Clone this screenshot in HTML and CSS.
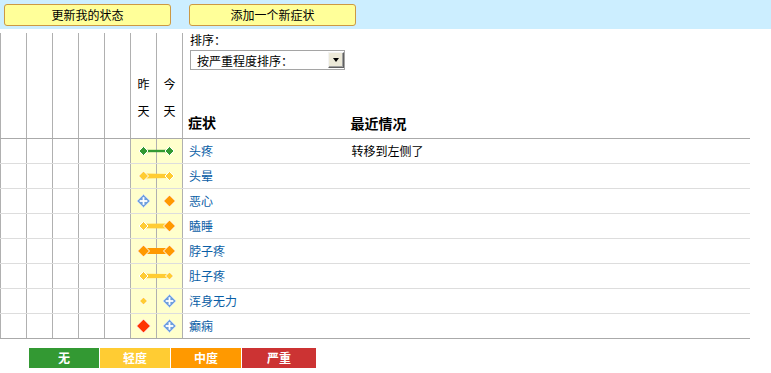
FILE: index.html
```html
<!DOCTYPE html>
<html lang="zh-CN">
<head>
    <meta charset="UTF-8">
    <title>症状追踪</title>
    <link rel="stylesheet" href="styles.css">
</head>
<body>

<div class="topbar">
    <button class="action-btn">更新我的状态</button>
    <button class="action-btn">添加一个新症状</button>
</div>

<svg class="defs" width="0" height="0">
    <defs>
        <g id="plus">
            <path d="M0 -6.5L6.5 0 0 6.5 -6.5 0Z" fill="#6f9fdc" stroke="#c9dcf4" stroke-width="1"/>
            <rect x="-3.8" y="-0.9" width="7.6" height="1.8" fill="#fff"/>
            <rect x="-0.9" y="-3.8" width="1.8" height="7.6" fill="#fff"/>
        </g>
    </defs>
</svg>

<table class="tracker">
    <colgroup>
        <col class="c-blank"><col class="c-blank"><col class="c-blank"><col class="c-blank"><col class="c-blank">
        <col class="c-day"><col class="c-day">
        <col class="c-name"><col>
    </colgroup>
    <thead>
        <tr>
            <th class="grid"></th>
            <th class="grid"></th>
            <th class="grid"></th>
            <th class="grid"></th>
            <th class="grid"></th>
            <th class="grid day-head">昨<br>天</th>
            <th class="grid day-head">今<br>天</th>
            <th class="name-head">
                <div class="sort-label">排序：</div>
                <div class="sort-box">
                    <select class="sort-select">
                        <option>按严重程度排序：</option>
                        <option>按名称排序</option>
                    </select>
                    <span class="sort-arrow"></span>
                </div>
                <div class="col-title">症状</div>
            </th>
            <th class="recent-head"><div class="col-title">最近情况</div></th>
        </tr>
    </thead>
    <tbody>
        <tr>
            <td class="grid"></td><td class="grid"></td><td class="grid"></td><td class="grid"></td><td class="grid"></td>
            <td class="grid day yest">
                <svg class="trend" width="52" height="25" viewBox="0 0 52 25">
                    <rect x="14" y="11.8" width="25" height="2.4" fill="#339933"/>
                    <path d="M13.5 8.5L18 13 13.5 17.5 9 13Z" fill="#339933" stroke="#fff"/>
                    <path d="M39.5 8.5L44 13 39.5 17.5 35 13Z" fill="#339933" stroke="#fff"/>
                </svg>
            </td>
            <td class="grid day"></td>
            <td class="name"><a href="#">头疼</a></td>
            <td class="recent">转移到左侧了</td>
        </tr>
        <tr>
            <td class="grid"></td><td class="grid"></td><td class="grid"></td><td class="grid"></td><td class="grid"></td>
            <td class="grid day yest">
                <svg class="trend" width="52" height="25" viewBox="0 0 52 25">
                    <polygon points="14,10.5 39,11 39,15 14,15.5" fill="#ffcc33"/>
                    <path d="M13.5 8L18.5 13 13.5 18 8.5 13Z" fill="#ffcc33" stroke="#fff"/>
                    <path d="M39.5 8.5L44 13 39.5 17.5 35 13Z" fill="#ffcc33" stroke="#fff"/>
                </svg>
            </td>
            <td class="grid day"></td>
            <td class="name"><a href="#">头晕</a></td>
            <td class="recent"></td>
        </tr>
        <tr>
            <td class="grid"></td><td class="grid"></td><td class="grid"></td><td class="grid"></td><td class="grid"></td>
            <td class="grid day yest">
                <svg class="trend" width="52" height="25" viewBox="0 0 52 25">
                    <use href="#plus" x="13.5" y="13"/>
                    <path d="M39.5 7L45.5 13 39.5 19 33.5 13Z" fill="#ff9900" stroke="#fff"/>
                </svg>
            </td>
            <td class="grid day"></td>
            <td class="name"><a href="#">恶心</a></td>
            <td class="recent"></td>
        </tr>
        <tr>
            <td class="grid"></td><td class="grid"></td><td class="grid"></td><td class="grid"></td><td class="grid"></td>
            <td class="grid day yest">
                <svg class="trend" width="52" height="25" viewBox="0 0 52 25">
                    <polygon points="14,10.8 39,10.5 39,15.5 14,15.2" fill="#ffcc33"/>
                    <path d="M13.5 8.5L18 13 13.5 17.5 9 13Z" fill="#ffcc33" stroke="#fff"/>
                    <path d="M39.5 7L45.5 13 39.5 19 33.5 13Z" fill="#ff9900" stroke="#fff"/>
                </svg>
            </td>
            <td class="grid day"></td>
            <td class="name"><a href="#">瞌睡</a></td>
            <td class="recent"></td>
        </tr>
        <tr>
            <td class="grid"></td><td class="grid"></td><td class="grid"></td><td class="grid"></td><td class="grid"></td>
            <td class="grid day yest">
                <svg class="trend" width="52" height="25" viewBox="0 0 52 25">
                    <polygon points="14,10 39,10 39,16 14,16" fill="#ff9900"/>
                    <path d="M13.5 7L19.5 13 13.5 19 7.5 13Z" fill="#ff9900" stroke="#fff"/>
                    <path d="M39.5 7L45.5 13 39.5 19 33.5 13Z" fill="#ff9900" stroke="#fff"/>
                </svg>
            </td>
            <td class="grid day"></td>
            <td class="name"><a href="#">脖子疼</a></td>
            <td class="recent"></td>
        </tr>
        <tr>
            <td class="grid"></td><td class="grid"></td><td class="grid"></td><td class="grid"></td><td class="grid"></td>
            <td class="grid day yest">
                <svg class="trend" width="52" height="25" viewBox="0 0 52 25">
                    <polygon points="14,10.8 39,11 39,15 14,15.2" fill="#ffcc33"/>
                    <path d="M13.5 8.5L18 13 13.5 17.5 9 13Z" fill="#ffcc33" stroke="#fff"/>
                    <path d="M39.5 9L43.5 13 39.5 17 35.5 13Z" fill="#ffcc33" stroke="#fff"/>
                </svg>
            </td>
            <td class="grid day"></td>
            <td class="name"><a href="#">肚子疼</a></td>
            <td class="recent"></td>
        </tr>
        <tr>
            <td class="grid"></td><td class="grid"></td><td class="grid"></td><td class="grid"></td><td class="grid"></td>
            <td class="grid day yest">
                <svg class="trend" width="52" height="25" viewBox="0 0 52 25">
                    <path d="M13.5 9L17.5 13 13.5 17 9.5 13Z" fill="#ffcc33" stroke="#fff"/>
                    <use href="#plus" x="39.5" y="13"/>
                </svg>
            </td>
            <td class="grid day"></td>
            <td class="name"><a href="#">浑身无力</a></td>
            <td class="recent"></td>
        </tr>
        <tr>
            <td class="grid"></td><td class="grid"></td><td class="grid"></td><td class="grid"></td><td class="grid"></td>
            <td class="grid day yest">
                <svg class="trend" width="52" height="25" viewBox="0 0 52 25">
                    <path d="M13.5 6L20.5 13 13.5 20 6.5 13Z" fill="#ff3300" stroke="#fff"/>
                    <use href="#plus" x="39.5" y="13"/>
                </svg>
            </td>
            <td class="grid day"></td>
            <td class="name"><a href="#">癫痫</a></td>
            <td class="recent"></td>
        </tr>
    </tbody>
</table>

<div class="legend">
    <span class="level none">无</span>
    <span class="level mild">轻度</span>
    <span class="level moderate">中度</span>
    <span class="level severe">严重</span>
</div>

</body>
</html>
```

FILE: styles.css
```css
body {
    margin: 0;
    font-family: "Noto Sans CJK SC", "Noto Sans", sans-serif;
    font-size: 12px;
    color: #000;
    background-color: #fff;
}

.defs {
    position: absolute;
}

/* top action bar */
.topbar {
    background-color: #cceeff;
    height: 29px;
    box-sizing: border-box;
    padding: 4px 0 0 4px;
    display: flex;
    gap: 18px;
}

.action-btn {
    width: 167px;
    height: 22px;
    padding: 0;
    background-color: #ffff99;
    border: 1px solid #cc9944;
    border-radius: 3px;
    font: 12px "Noto Sans CJK SC", sans-serif;
    line-height: 18px;
    color: #000;
}

/* symptom table */
.tracker {
    margin-top: 4px;
    width: 750px;
    border-collapse: collapse;
    table-layout: fixed;
}

.c-blank,
.c-day {
    width: 26px;
}

.c-name {
    width: 163px;
}

.tracker th,
.tracker td {
    padding: 0;
}

.tracker thead th {
    box-sizing: border-box;
    height: 105px;
    border-bottom: 1px solid #aaaaaa;
    font-weight: normal;
}

.tracker .grid {
    border-left: 1px solid #b0b0b0;
    border-right: 1px solid #b0b0b0;
}

.day-head {
    vertical-align: bottom;
    text-align: center;
    line-height: 27px;
    padding-bottom: 14px !important;
}

.name-head {
    vertical-align: top;
    text-align: left;
    padding-left: 7px !important;
}

.sort-label {
    line-height: 14px;
}

.sort-box {
    position: relative;
    width: 155px;
    margin-top: 3px;
}

.sort-select {
    appearance: none;
    -webkit-appearance: none;
    width: 155px;
    height: 20px;
    padding: 0 0 0 6px;
    border: 1px solid #a5a5a5;
    border-radius: 0;
    background-color: #fff;
    font: 12px "Noto Sans CJK SC", sans-serif;
    color: #000;
}

.sort-arrow {
    position: absolute;
    right: 1px;
    top: 2px;
    width: 16px;
    height: 16px;
    box-sizing: border-box;
    background-color: #ece9d8;
    border: 1px solid;
    border-color: #f4f4f4 #606060 #606060 #f4f4f4;
    box-shadow: inset -1px -1px 0 #a0a0a0;
    pointer-events: none;
}

.sort-arrow::after {
    content: "";
    position: absolute;
    left: 4px;
    top: 5px;
    border-left: 3px solid transparent;
    border-right: 3px solid transparent;
    border-top: 4px solid #000;
}

.col-title {
    font-size: 14px;
    font-weight: bold;
    line-height: 16px;
}

.name-head .col-title {
    margin-top: 44px;
    margin-left: -2px;
}

.recent-head {
    vertical-align: bottom;
    text-align: left;
    padding: 0 0 7px 5px !important;
}

.tracker tbody td {
    height: 24px;
    border-bottom: 1px solid #dddddd;
}

.tracker tbody tr:last-child td {
    border-bottom: 1px solid #aaaaaa;
}

.tracker td.day {
    background-color: #ffffcc;
}

.tracker td.yest {
    position: relative;
}

.trend {
    position: absolute;
    left: -1px;
    top: -1px;
    overflow: visible;
}

.name {
    padding-left: 6px !important;
}

.name a {
    color: #0a5ea6;
    text-decoration: none;
}

.recent {
    padding-left: 6px !important;
}

/* severity legend */
.legend {
    display: flex;
    gap: 1px;
    margin: 9px 0 0 29px;
}

.level {
    width: 70px;
    height: 20px;
    line-height: 20px;
    text-align: center;
    color: #fff;
    font-weight: bold;
}

.none { background-color: #339933; }
.mild { background-color: #ffcc33; }
.moderate { background-color: #ff9900; }
.severe { background-color: #cc3333; width: 74px; }
```
